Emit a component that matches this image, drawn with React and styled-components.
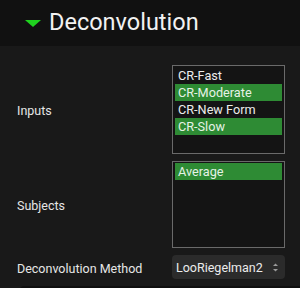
import React from "react";
import styled, { createGlobalStyle } from "styled-components";

const Global = createGlobalStyle`
  html, body { margin: 0; padding: 0; background: #191919; }
  body { font-family: Roboto, "Liberation Sans", sans-serif; color: #e6e6e6; width: 300px; height: 288px; overflow: hidden; }
`;

const Header = styled.div`
  height: 46px;
  background: #111111;
  display: flex;
  align-items: center;
  padding-left: 25px;
  gap: 8px;
  box-sizing: border-box;
`;

const Caret = styled.span`
  width: 0;
  height: 0;
  border-left: 8px solid transparent;
  border-right: 8px solid transparent;
  border-top: 7px solid #1fd21f;
  margin-top: 1px;
`;

const Title = styled.h1`
  margin: 0;
  font-size: 23.5px;
  font-weight: 400;
  color: #f2f2f2;
  line-height: 1;
`;

const Body = styled.div`
  display: grid;
  grid-template-columns: 155px 113px;
  row-gap: 7px;
  padding: 19px 15px 0 17px;
`;

const Label = styled.div`
  font-size: 12.5px;
  display: flex;
  align-items: center;
  color: #e6e6e6;
  padding-top: 2px;
`;

const ListBox = styled.div`
  height: ${(p) => p.$h}px;
  box-sizing: border-box;
  border: 1px solid #6a6a6a;
  background: #141414;
  padding: 1px 2px;
  display: flex;
  flex-direction: column;
`;

const Item = styled.div`
  height: 17px;
  line-height: 17px;
  font-size: 12.7px;
  padding-left: 3px;
  background: ${(p) => (p.$selected ? "#2e8b34" : "transparent")};
  color: ${(p) => (p.$selected ? "#e6f2e6" : "#ececec")};
`;

const Select = styled.div`
  height: 24px;
  box-sizing: border-box;
  border-radius: 4px;
  background: #2b2b2b;
  display: flex;
  align-items: center;
  justify-content: space-between;
  padding: 0 6px 0 4px;
  font-size: 12.5px;
  color: #ececec;
`;

const Footer = styled.div`
  margin: 7px 0 0 20px;
  height: 10px;
  background: #0f0f0f;
  border-top-left-radius: 4px;
`;

const Arrows = () => (
  <svg width="7" height="11" viewBox="0 0 7 11">
    <path d="M1 4 L3.5 1.5 L6 4 Z" fill="#9a9a9a" />
    <path d="M1 7 L3.5 9.5 L6 7 Z" fill="#9a9a9a" />
  </svg>
);

const inputs = [
  { name: "CR-Fast", sel: false },
  { name: "CR-Moderate", sel: true },
  { name: "CR-New Form", sel: false },
  { name: "CR-Slow", sel: true },
];

export default function App() {
  return (
    <>
      <Global />
      <Header>
        <Caret />
        <Title>Deconvolution</Title>
      </Header>
      <Body>
        <Label>Inputs</Label>
        <ListBox $h={89}>
          {inputs.map((i) => (
            <Item key={i.name} $selected={i.sel}>{i.name}</Item>
          ))}
        </ListBox>
        <Label>Subjects</Label>
        <ListBox $h={87}>
          <Item $selected>Average</Item>
        </ListBox>
        <Label>Deconvolution Method</Label>
        <Select>
          <span>LooRiegelman2</span>
          <Arrows />
        </Select>
      </Body>
      <Footer />
    </>
  );
}
